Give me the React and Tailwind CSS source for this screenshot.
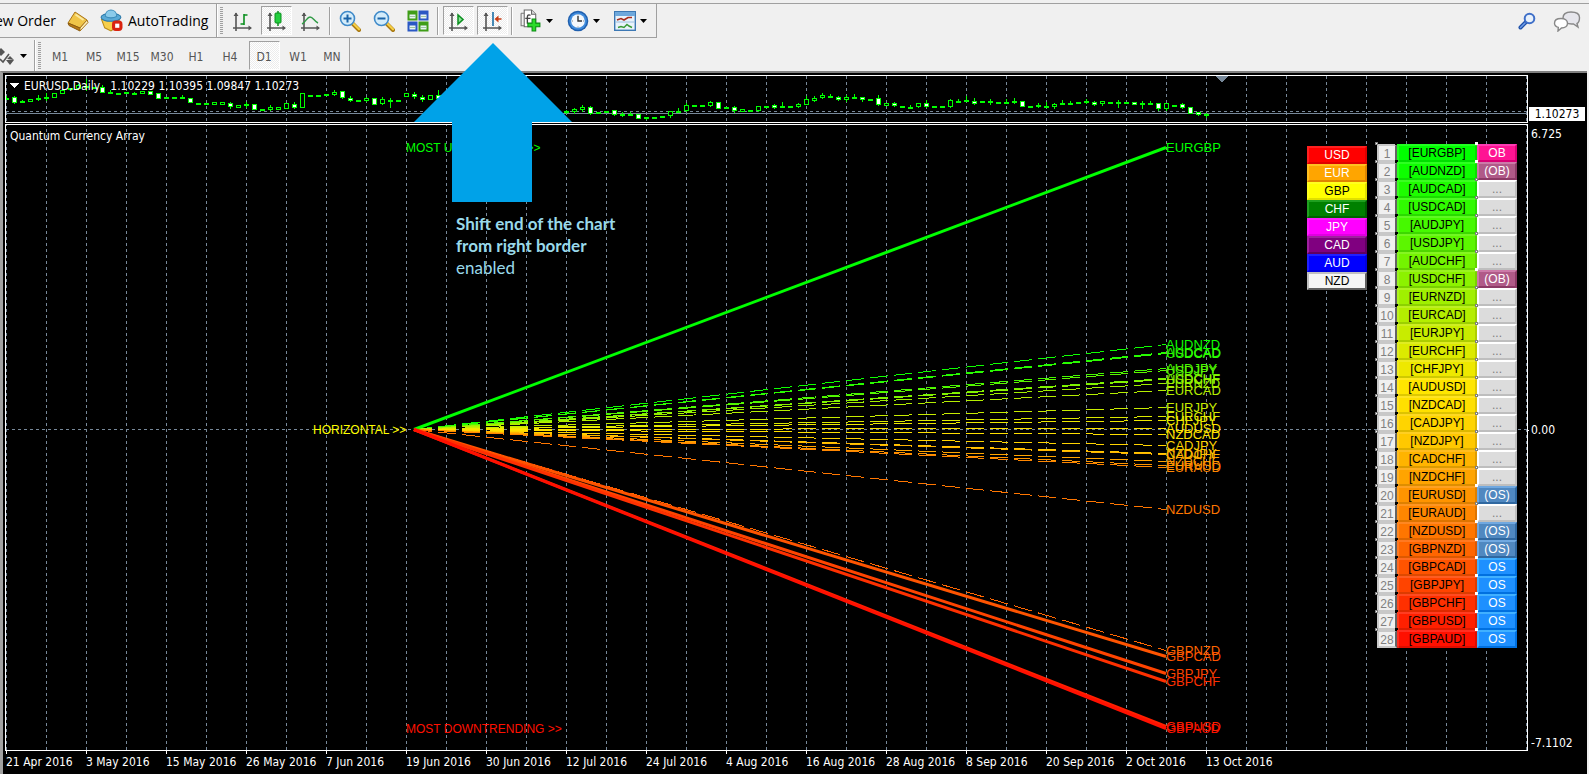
import React from "react";

const COLORS = [
  "#00ff00", "#0eff00", "#1efd00", "#30fb00", "#46f900", "#5cf600", "#74f400",
  "#8cf200", "#a0f000", "#b4ee00", "#c8ec00", "#dcea00", "#eee800", "#ffe600",
  "#ffe000", "#ffd400", "#ffc800", "#ffb400", "#ffa400", "#ff9400", "#ff8600",
  "#ff7600", "#ff6600", "#ff5400", "#ff4400", "#ff3000", "#ff2000", "#ff1000",
];

// name, value position at the right end of the fan, signal
const PAIRS = [
  ["EURGBP", 147, "OB"], ["AUDNZD", 344, "(OB)"], ["AUDCAD", 352, "..."], ["USDCAD", 353, "..."],
  ["AUDJPY", 368, "..."], ["USDJPY", 370, "..."], ["AUDCHF", 378, "..."], ["USDCHF", 379, "(OB)"],
  ["EURNZD", 383, "..."], ["EURCAD", 390, "..."], ["EURJPY", 407, "..."], ["EURCHF", 416, "..."],
  ["CHFJPY", 420, "..."], ["AUDUSD", 428, "..."], ["NZDCAD", 434, "..."], ["CADJPY", 445, "..."],
  ["NZDJPY", 453, "..."], ["CADCHF", 454, "..."], ["NZDCHF", 461, "..."], ["EURUSD", 465, "(OS)"],
  ["EURAUD", 467, "..."], ["NZDUSD", 509, "(OS)"], ["GBPNZD", 650, "(OS)"], ["GBPCAD", 656, "OS"],
  ["GBPJPY", 673, "OS"], ["GBPCHF", 681, "OS"], ["GBPUSD", 726, "OS"], ["GBPAUD", 728, "OS"],
];

const SOLID = ["EURGBP", "GBPCAD", "GBPJPY", "GBPCHF", "GBPUSD", "GBPAUD"];

const SIGNAL_STYLE = {
  OB: "bg-[#ff1493] border-t-[#ff3cb4] border-l-[#ff3cb4] border-b-[#d80074] border-r-[#d80074] text-white",
  "(OB)": "bg-[#b05a88] border-t-[#cc7aa8] border-l-[#cc7aa8] border-b-[#8c3a66] border-r-[#8c3a66] text-white",
  "...": "bg-[#dcdcdc] border-t-white border-l-white border-b-[#bebebe] border-r-[#bebebe] text-[#808080]",
  "(OS)": "bg-[#5088c0] border-t-[#70a8e0] border-l-[#70a8e0] border-b-[#3068a0] border-r-[#3068a0] text-white",
  OS: "bg-[#1e90ff] border-t-[#40b0ff] border-l-[#40b0ff] border-b-[#0070e0] border-r-[#0070e0] text-white",
};

const CURRENCIES = [
  ["USD", "bg-[#ff0000] border-t-[#ff2020] border-l-[#ff2020] border-b-[#e00000] border-r-[#e00000] text-white"],
  ["EUR", "bg-[#ffa500] border-t-[#ffc020] border-l-[#ffc020] border-b-[#e08600] border-r-[#e08600] text-white"],
  ["GBP", "bg-[#ffff00] border-t-[#ffff20] border-l-[#ffff20] border-b-[#e0e000] border-r-[#e0e000] text-black"],
  ["CHF", "bg-[#008000] border-t-[#20a020] border-l-[#20a020] border-b-[#006000] border-r-[#006000] text-white"],
  ["JPY", "bg-[#ff00ff] border-t-[#ff20ff] border-l-[#ff20ff] border-b-[#e000e0] border-r-[#e000e0] text-white"],
  ["CAD", "bg-[#800080] border-t-[#a020a0] border-l-[#a020a0] border-b-[#600060] border-r-[#600060] text-white"],
  ["AUD", "bg-[#0000ff] border-t-[#2020ff] border-l-[#2020ff] border-b-[#0000e0] border-r-[#0000e0] text-white"],
  ["NZD", "bg-[#f5f5f5] border-t-[#c0c0c0] border-l-[#c0c0c0] border-b-[#606060] border-r-[#606060] text-black"],
];

const DATES = [
  "21 Apr 2016", "3 May 2016", "15 May 2016", "26 May 2016", "7 Jun 2016", "19 Jun 2016",
  "30 Jun 2016", "12 Jul 2016", "24 Jul 2016", "4 Aug 2016", "16 Aug 2016", "28 Aug 2016",
  "8 Sep 2016", "20 Sep 2016", "2 Oct 2016", "13 Oct 2016",
];

// kind:top:bottom:wickTop:wickBottom  (w = falling, h = rising, d = flat)
const FIRST_RUN =
  "d98:98:96:99 w97:102:96:103 d101:101:100:102 h99:101 d98:98:95:100 d97:97:93:100 h93:97 h90:93 d88 h85:88:84:89 d86:86:79:90 d87 w87:92:85:92 d92:92:90:93 d93 d92 d93:93:92:94 h91:93 w91:94 w93:98 d97 d97 d97:97:95:98 w98:102 d103 d103 h102:104 h102:104 w103:106:102:108 h105:106 d104:104:102:107 w104:109 d109 h107:109:105:110 h107:109 h103:108 w104:107:102:108 h93:107 d95 d95 d94 h92:94:90:95 w91:97:91:98 w98:100:96:101 d100 h98:100:97:101 w98:104 h99:103:97:104 d100:100:98:107 d100 h93:96 w94:96:92:98 w97:99:95:101 h95:99 w95:98:90:99".split(" ");
const SECOND_RUN =
  "d111:111:110:113 h109:111:108:113 h107:109:105:111 w107:113:106:114 d112 d111 w110:114:110:115 d114:114:112:116 d114:114:112:115 w114:118 d117:117:117:119 d117 d116 h111:115:111:117 d111:111:108:112 h105:110:103:111 d105 d105 h102:105:101:106 w102:108 d107 w107:110:106:112 h109:110 d110 h106:110:106:111 d106 w105:107:104:108 d106:106:102:107 d106 h104:106:103:107 h99:104:96:104 h98:99:96:101 h95:97:93:98 d96:96:94:97 w97:99:96:100 h97:99:95:101 d97:97:94:98 w97:99:97:101 d99 w98:104:95:105 h103:105 w103:105:102:106 d106 d107:107:105:108 h103:106:103:107 w103:106:100:107 d106 d106 h100:106:99:107 d101:101:99:102 d100:100:96:101 w101:103:98:104 d101 d101:101:99:104 d102 d102:102:99:103 d101:101:98:103 w101:106 d106 d105:105:103:107 d106:106:102:107 h104:106:103:108 d103:103:100:104 d103:103:101:104 d102 d101:101:99:103 w102:104:101:105 h101:103:101:105 d102 d102:102:100:107 d102 w102:103 d103:103:101:108 d103:103:101:104 w103:108:103:110 h103:108:103:110 d105 w104:107:103:108 w107:113 w112:114:112:115 d114:114:113:117".split(" ");

function parse(run, first) {
  return run.map((c, i) => {
    const [top, bottom, wickTop, wickBottom] = c.slice(1).split(":").map(Number);
    const b = bottom || top;
    return { x: 6 + 8 * (first + i), kind: c[0], top, bottom: b, wickTop: wickTop || top, wickBottom: wickBottom || b };
  });
}

const CANDLES = [...parse(FIRST_RUN, 0), ...parse(SECOND_RUN, 70)];

function Candle({ x, kind, top, bottom, wickTop, wickBottom }) {
  const h = Math.max(bottom - top + 1, 2);
  return (
    <g>
      <rect x={x} y={wickTop} width="1" height={wickBottom - wickTop + 1} fill="#00ff00" />
      <rect x={x - 2} y={top} width="5" height={kind === "d" ? 2 : Math.max(h, 3)} fill="#00ff00" />
      {kind !== "d" && (
        <rect x={x - 1} y={top + 1} width="3" height={Math.max(h - 2, 1)} fill={kind === "w" ? "#fff" : "#000"} />
      )}
    </g>
  );
}

function Grid({ id, shift }) {
  return (
    <>
      <defs>
        <pattern id={id} width="40" height="6" y={shift} patternUnits="userSpaceOnUse">
          <rect width="1" height="3" fill="#778899" />
        </pattern>
      </defs>
      <rect width="100%" height="100%" fill={`url(#${id})`} />
    </>
  );
}

function PriceChart() {
  return (
    <div className="h-[48px] border border-white">
      <svg className="block h-full w-full font-['DejaVu_Sans_Condensed','DejaVu_Sans',sans-serif] text-[12px]" shapeRendering="crispEdges">
        <Grid id="price-grid" shift={0} />
        <line x1="0" x2="100%" y1="35.5" y2="35.5" stroke="#778899" strokeDasharray="3 3" />
        <line x1="0" x2="100%" y1="37.5" y2="37.5" stroke="#778899" />
        <g transform="translate(-6 -76)">
          {CANDLES.map((c) => <Candle key={c.x} {...c} />)}
          <path d="M1215 76h13l-6.500 6.500z" fill="#778899" />
          <path d="M9 83h10l-5 5z" fill="#fff" />
          <text x="24" y="90" fill="#fff" xmlSpace="preserve">EURUSD,Daily&nbsp;&nbsp; 1.10229 1.10395 1.09847 1.10273</text>
        </g>
      </svg>
    </div>
  );
}

function FanChart() {
  return (
    <div className="mt-px h-[627px] border border-white">
      <svg className="block h-full w-full font-['Liberation_Sans',Arial,sans-serif] text-[13px]">
        <Grid id="fan-grid" shift={4} />
        <line x1="0" x2="100%" y1="304.5" y2="304.5" stroke="#778899" strokeDasharray="3 3" />
        <g transform="translate(-6 -125)">
          {PAIRS.map(([name, y], i) => {
            const solid = SOLID.includes(name);
            const k = Math.hypot(752, y - 429) / 752;
            return (
              <line
                key={name} x1="414" y1="429.500" x2="1166" y2={y + 0.5}
                stroke={COLORS[i]} strokeWidth={solid ? 3 : 1}
                strokeDasharray={solid ? undefined : `${18 * k} ${6 * k}`}
                shapeRendering={solid ? "auto" : "crispEdges"}
              />
            );
          })}
          {PAIRS.map(([name, y], i) => (
            <text key={name} x="1166" y={y + 5} fill={COLORS[i]}>{name}</text>
          ))}
          <g className="text-[12px]">
            <text x="406" y="152" fill="#00ff00">MOST UPTRENDING &gt;&gt;</text>
            <text x="313" y="434" fill="#ffff00">HORIZONTAL &gt;&gt;</text>
            <text x="406" y="733" fill="#ff1000">MOST DOWNTRENDING &gt;&gt;</text>
          </g>
          <text x="10" y="140" fill="#fff" className="font-['DejaVu_Sans_Condensed','DejaVu_Sans',sans-serif] text-[12px]">Quantum Currency Array</text>
        </g>
      </svg>
    </div>
  );
}

function CurrencyLegend() {
  return (
    <div className="mt-0.5 flex w-[60px] flex-col">
      {CURRENCIES.map(([name, tone]) => (
        <button key={name} type="button" className={`h-[18px] border-2 text-center text-[12px] leading-[15px] ${tone}`}>{name}</button>
      ))}
    </div>
  );
}

function Ranking() {
  return (
    <table className="border-collapse text-center text-[12px] leading-[14px]">
      <tbody>
        {PAIRS.map(([name, , signal], i) => (
          <tr key={name} className="h-[18px]">
            <td className="relative h-[18px] w-[20px] p-0">
              <div className="h-[18px] w-[20px] border-2 border-t-[#c8c8c8] border-r-[#646464] border-b-[#c8c8c8] border-l-[#c8c8c8] bg-[#f0f0f0] leading-[16px] text-[#808080]">{i + 1}</div>
              <span className="absolute -top-0.5 -left-0.5 size-[3px] border border-[#808080] bg-white" />
              <span className="absolute -top-0.5 -right-px size-[3px] bg-black" />
            </td>
            <td className="relative h-[18px] w-[80px] p-0">
              <button
                type="button"
                className="relative block h-[18px] w-[80px] leading-[17px] text-black shadow-[inset_2px_2px_0_rgba(255,255,255,0.130),inset_-2px_-2px_0_rgba(0,0,0,0.130)]"
                style={{ backgroundColor: COLORS[i] }}
              >
                [{name}]
              </button>
              <span className={`absolute -top-0.5 -right-px z-10 size-[3px] border bg-white ${signal === "..." ? "border-[#808080]" : "border-white"}`} />
            </td>
            <td className="h-[18px] w-[40px] p-0">
              <div className={`h-[18px] w-[40px] border-2 ${SIGNAL_STYLE[signal]}`}>{signal}</div>
            </td>
          </tr>
        ))}
      </tbody>
    </table>
  );
}

function Axes() {
  return (
    <>
      <path d="M5 3v18M2 18h18" stroke="#555" strokeWidth="1.600" fill="none" />
      <path d="M2.500 6L5 2.500 7.500 6zM17.500 15.500L21 18l-3.500 2.500z" fill="#555" />
    </>
  );
}

function Icon({ children, size = 22 }) {
  return <svg width={size} height={size} viewBox="0 0 22 22" aria-hidden="true" className="shrink-0">{children}</svg>;
}

const BarsIcon = () => (
  <Icon><Axes /><path d="M13 4v11M13 5h3.500M9.500 14H13" stroke="#0a8f1e" strokeWidth="1.600" fill="none" /></Icon>
);
const CandlesIcon = () => (
  <Icon><Axes /><path d="M13 1v15" stroke="#0a8f1e" strokeWidth="1.500" /><rect x="10" y="3" width="6" height="10" rx="1" fill="#23cf3f" stroke="#0a8f1e" /></Icon>
);
const LineIcon = () => (
  <Icon><Axes /><path d="M3 14C7 12 8 7 11 7s4 4 8 6" stroke="#2f9a45" strokeWidth="1.400" fill="none" /></Icon>
);
const Magnifier = ({ plus }) => (
  <Icon>
    <path d="M13 13l7 7" stroke="#a87810" strokeWidth="4" strokeLinecap="round" />
    <path d="M13.500 12.800l6.500 6.500" stroke="#f6cf45" strokeWidth="2.300" strokeLinecap="round" />
    <circle cx="8.500" cy="8.500" r="7" fill="#d4ecfa" stroke="#3f8ac9" strokeWidth="1.600" />
    <path d={plus ? "M4.500 8.500h8M8.500 4.500v8" : "M4.500 8.500h8"} stroke="#1b64a8" strokeWidth="2" />
  </Icon>
);
const TileIcon = () => (
  <Icon>
    <rect x="0.500" y="0.500" width="10" height="10" fill="#3f9d17" /><rect x="11.500" y="0.500" width="10" height="10" fill="#2a58c4" />
    <rect x="0.500" y="11.500" width="10" height="10" fill="#2a58c4" /><rect x="11.500" y="11.500" width="10" height="10" fill="#3f9d17" />
    <path d="M2.500 4.500h6v4h-6zM13.500 4.500h6v4h-6zM2.500 15.500h6v4h-6zM13.500 15.500h6v4h-6z" fill="#e8f4f4" />
    <path d="M3 6.500h5M14 6.500h5M3 17.500h5M14 17.500h5" stroke="#9fc7a0" />
  </Icon>
);
const ScrollIcon = () => (
  <Icon><Axes /><path d="M11 5v9l5-4.500z" fill="#8fe39b" stroke="#0a8f1e" strokeWidth="1.500" /></Icon>
);
const ShiftIcon = () => (
  <Icon><Axes /><path d="M12 2v14" stroke="#1a6ea5" strokeWidth="1.600" /><path d="M13.500 9l4-3.500v2.700h3v1.600h-3v2.700z" fill="#c83c14" /></Icon>
);
const IndicatorIcon = () => (
  <Icon size={23}>
    <path d="M5 1h7l4 4v12H5z" fill="#fff" stroke="#666" /><path d="M12 1v4h4" fill="#ddd" stroke="#666" />
    <path d="M2 4h3M2 4v12h3" stroke="#777" fill="none" />
    <path d="M11 6c-2-1-3 0-3 2v6M6 9h5" stroke="#444" strokeWidth="1.300" fill="none" />
    <path d="M12.500 9.500h3.500v4h4v3.500h-4v4h-3.500v-4h-4v-3.500h4z" fill="#2bdc2b" stroke="#0c8b14" />
  </Icon>
);
const ClockIcon = () => (
  <Icon>
    <circle cx="11" cy="11" r="10.300" fill="#1f5fae" /><circle cx="11" cy="11" r="8.800" fill="#3f8bdc" />
    <circle cx="11" cy="11" r="6.800" fill="#f4f8fc" /><path d="M11 6v5h4" stroke="#333" strokeWidth="1.400" fill="none" />
    <path d="M11 4.500v1M17 11h-1M11 17.500v-1M5 11h1" stroke="#888" />
  </Icon>
);
const TemplateIcon = () => (
  <Icon>
    <rect x="0.700" y="1.700" width="20.600" height="18.600" fill="#e9f3fb" stroke="#3c78b4" strokeWidth="1.400" />
    <path d="M1 4h20" stroke="#6ea8dc" strokeWidth="4" />
    <path d="M3 10l4-1.500 3 1.500 4-2.500h4" stroke="#a82c1c" strokeWidth="1.600" fill="none" />
    <path d="M1 12h20" stroke="#9cc0e0" />
    <path d="M4 17.500l3-1 3 1 3-3 2 1.500 3 1.500" stroke="#3a9a38" strokeWidth="1.500" fill="none" />
  </Icon>
);
const BookIcon = () => (
  <Icon>
    <path d="M1 13L8 2l12 8-7 8z" fill="#f0c548" stroke="#a8741a" />
    <path d="M1 13l12 5v3L2 15.500z" fill="#b97b16" stroke="#8a5a10" />
    <path d="M13 18l7-8 1 2.500-8 8.500z" fill="#fff0b8" stroke="#a8741a" />
    <path d="M8.500 4.500l8 5.500" stroke="#fbe9a0" strokeWidth="2" />
  </Icon>
);
const RobotIcon = () => (
  <Icon size={23}>
    <path d="M1.500 10h17l-2 7-6 4-6-3z" fill="#f7cf4a" stroke="#b98a18" />
    <ellipse cx="10.500" cy="8" rx="9.500" ry="3.800" fill="#5aaad6" stroke="#2b78a8" />
    <path d="M5 7c0-8 11-8 11 0-3 2-8 2-11 0z" fill="#8bcbea" stroke="#3b8cba" />
    <rect x="11.500" y="11" width="10" height="10" rx="3.500" fill="#d9230f" />
    <rect x="14.500" y="14" width="4" height="4" fill="#fff" />
  </Icon>
);
const ChatIcon = () => (
  <svg width="28" height="21" viewBox="0 0 28 21" aria-hidden="true">
    <path d="M18 1c5 0 8.500 2 8.500 5.500S25 12 24 12.500l1 3.500-4.500-3C14 13.500 10 11 10 7s3.500-6 8-6z" fill="#e6e6ec" stroke="#888" strokeWidth="1.400" />
    <path d="M8 7.500c4 0 6.500 1.800 6.500 4.700S12 17 8.500 17L5 20l.300-3.600C2.500 15.500 1.500 14 1.500 12.200 1.500 9.300 4 7.500 8 7.500z" fill="#fff" stroke="#888" strokeWidth="1.400" />
  </svg>
);
const SearchIcon = () => (
  <svg width="18" height="18" viewBox="0 0 18 18" aria-hidden="true">
    <path d="M8 10l-5.500 5.500" stroke="#1f50a8" strokeWidth="4" strokeLinecap="round" />
    <path d="M7 11l-4.500 4.500" stroke="#6f9ce8" strokeWidth="1.500" strokeLinecap="round" />
    <circle cx="11.500" cy="6.500" r="4.800" fill="#e8f1fb" stroke="#3f6fc8" strokeWidth="2" />
  </svg>
);
const Caret = () => <svg width="7" height="4" viewBox="0 0 7 4" aria-hidden="true"><path d="M0 0h7L3.500 4z" fill="#000" /></svg>;

const PRESSED = "border border-t-[#a0a0a0] border-l-[#a0a0a0] border-b-white border-r-white bg-[repeating-conic-gradient(#ffffff_0_25%,#ececec_0_50%)] bg-[length:2px_2px]";

function ToolButton({ label, pressed, children }) {
  return (
    <button type="button" aria-label={label} aria-pressed={!!pressed} className="flex h-[32px] w-[34px] items-center justify-center">
      <span className={`flex h-[29px] w-[31px] items-center justify-center ${pressed ? PRESSED : ""}`}>{children}</span>
    </button>
  );
}

function MenuButton({ label, children, width }) {
  return (
    <button type="button" aria-label={label} className={`flex h-[32px] items-center gap-1 pl-0.5 ${width}`}>
      {children}
      <Caret />
    </button>
  );
}

const Separator = () => <span className="mx-0.5 h-[28px] w-0.5 border-l border-[#a0a0a0] bg-white" />;
const Grip = () => <span className="mr-0.5 ml-0.5 h-[28px] w-[3px] bg-[repeating-linear-gradient(#a0a0a0_0_1px,#f0f0f0_1px_2px)]" />;

function MainToolbar() {
  return (
    <div className="flex h-[34px] items-center justify-between pr-2">
      <div className="flex h-[34px] items-center border-r border-b border-[#a0a0a0] font-['Open_Sans','Noto_Sans',sans-serif] text-[14px] text-black">
        <button type="button" className="flex w-[58px] justify-end overflow-hidden pr-0.5 whitespace-nowrap">New Order</button>
        <button type="button" aria-label="Metaeditor" className="flex w-10 justify-center"><BookIcon /></button>
        <button type="button" className="flex w-[118px] items-center gap-[5px] pl-0.5"><RobotIcon />AutoTrading</button>
        <span className="h-full w-0.5 border-l border-[#a0a0a0] bg-white" />
        <Grip />
        <ToolButton label="Bar Chart"><BarsIcon /></ToolButton>
        <ToolButton label="Candlesticks" pressed><CandlesIcon /></ToolButton>
        <ToolButton label="Line Chart"><LineIcon /></ToolButton>
        <Separator />
        <ToolButton label="Zoom In"><Magnifier plus /></ToolButton>
        <ToolButton label="Zoom Out"><Magnifier /></ToolButton>
        <ToolButton label="Tile Windows"><TileIcon /></ToolButton>
        <Separator />
        <ToolButton label="Auto Scroll" pressed><ScrollIcon /></ToolButton>
        <ToolButton label="Chart Shift" pressed><ShiftIcon /></ToolButton>
        <Separator />
        <MenuButton label="Indicators" width="w-[48px] ml-0.5"><IndicatorIcon /></MenuButton>
        <MenuButton label="Periods" width="w-[47px]"><ClockIcon /></MenuButton>
        <MenuButton label="Templates" width="w-[44px]"><TemplateIcon /></MenuButton>
      </div>
      <div className="flex items-center gap-[17px]">
        <button type="button" aria-label="Search"><SearchIcon /></button>
        <button type="button" aria-label="Chat"><ChatIcon /></button>
      </div>
    </div>
  );
}

function PeriodToolbar() {
  return (
    <div className="flex h-[33px]">
      <div className="flex items-center border-r border-[#a0a0a0] pt-0.5 font-['DejaVu_Sans_Condensed','DejaVu_Sans',sans-serif] text-[12px] text-[#555]">
        <button type="button" aria-label="Arrows" className="flex w-[34px] items-center gap-[5px]">
          <svg width="15" height="18" viewBox="0 0 15 18" aria-hidden="true">
            <path d="M-3 5l4-4 4 4-4 4zM6 13h8l-4 5zM7 12l3-3 4 4z" fill="#555" />
            <path d="M0 12l3 3 6-8" stroke="#555" strokeWidth="1.600" fill="none" />
          </svg>
          <Caret />
        </button>
        <span className="h-full w-0.5 border-l border-[#a0a0a0] bg-white" />
        <Grip />
        {["M1", "M5", "M15", "M30", "H1", "H4", "D1", "W1", "MN"].map((p) => (
          <button key={p} type="button" aria-pressed={p === "D1"} className="flex h-full w-[34px] items-center justify-center">
            <span className={`flex h-[29px] w-[31px] items-center justify-center pt-0.5 ${p === "D1" ? PRESSED : ""}`}>{p}</span>
          </button>
        ))}
      </div>
    </div>
  );
}

function Callout() {
  return (
    <div className="absolute top-[43px] left-[414px]">
      <svg width="158" height="159" viewBox="0 0 158 159" className="block" aria-hidden="true">
        <path d="M79 0l79 79h-40v80H38V79H0z" fill="#00a2e8" />
      </svg>
      <p className="mt-[11px] ml-[42px] w-[180px] font-['Lato',sans-serif] text-[17px] leading-[22px] text-[#99d9ea]">
        <b>Shift end of the chart<br />from right border</b><br />enabled
      </p>
    </div>
  );
}

export default function App() {
  return (
    <div className="relative min-h-screen bg-[#f0f0f0]">
      <header>
        <div className="h-[4px] border-b border-[#a0a0a0] bg-[#f0f0f0]" />
        <MainToolbar />
        <PeriodToolbar />
      </header>
      <main className="mr-0.5 border-t-2 border-l-[3px] border-t-[#808080] border-l-[#a0a0a0] bg-black pb-1">
        <div className="flex pt-0.5 pl-0.5">
          <section className="relative min-w-0 flex-1">
            <PriceChart />
            <FanChart />
            <div className="absolute top-[69px] right-[11px] flex gap-[10px] font-['Liberation_Sans',Arial,sans-serif]">
              <CurrencyLegend />
              <Ranking />
            </div>
            <div className="flex h-[19px] overflow-hidden pl-px font-['DejaVu_Sans_Condensed','DejaVu_Sans',sans-serif] text-[12px] leading-[16px] whitespace-nowrap text-white">
              {DATES.map((d) => (
                <div key={d} className="w-20 shrink-0">
                  <div className="h-[3px] w-px bg-white" />
                  {d}
                </div>
              ))}
            </div>
          </section>
          <aside className="flex w-[59px] shrink-0 flex-col font-['DejaVu_Sans_Condensed','DejaVu_Sans',sans-serif] text-[12px] leading-[14px] text-white">
            <div className="mt-[32px] mr-0.5 ml-px bg-white text-center text-black">1.10273</div>
            <div className="mt-[6px] pl-[3px]">6.725</div>
            <div className="mt-[282px] flex items-center gap-0.5"><span className="h-px w-px bg-white" />0.00</div>
            <div className="mt-[299px] pl-[3px]">-7.1102</div>
          </aside>
        </div>
      </main>
      <Callout />
    </div>
  );
}
